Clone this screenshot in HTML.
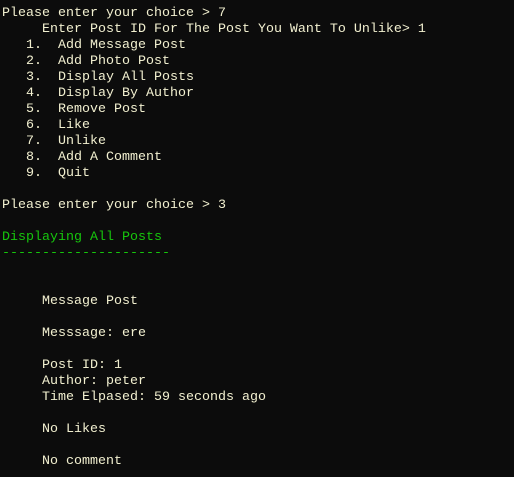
<!DOCTYPE html>
<html><head><meta charset="utf-8"><style>
html,body{margin:0;padding:0;background:#0c0c0c;width:514px;height:477px;overflow:hidden}
pre{margin:0;padding:6px 0 0 2px;font-family:"Liberation Mono",monospace;font-size:13.33px;line-height:16px;color:#f2f0d0;white-space:pre}
.g{color:#16c60c}
</style></head><body><pre>Please enter your choice &gt; 7
     Enter Post ID For The Post You Want To Unlike&gt; 1
   1.  Add Message Post
   2.  Add Photo Post
   3.  Display All Posts
   4.  Display By Author
   5.  Remove Post
   6.  Like
   7.  Unlike
   8.  Add A Comment
   9.  Quit

Please enter your choice &gt; 3

<span class="g">Displaying All Posts
---------------------</span>


     Message Post

     Messsage: ere

     Post ID: 1
     Author: peter
     Time Elpased: 59 seconds ago

     No Likes

     No comment
</pre></body></html>
